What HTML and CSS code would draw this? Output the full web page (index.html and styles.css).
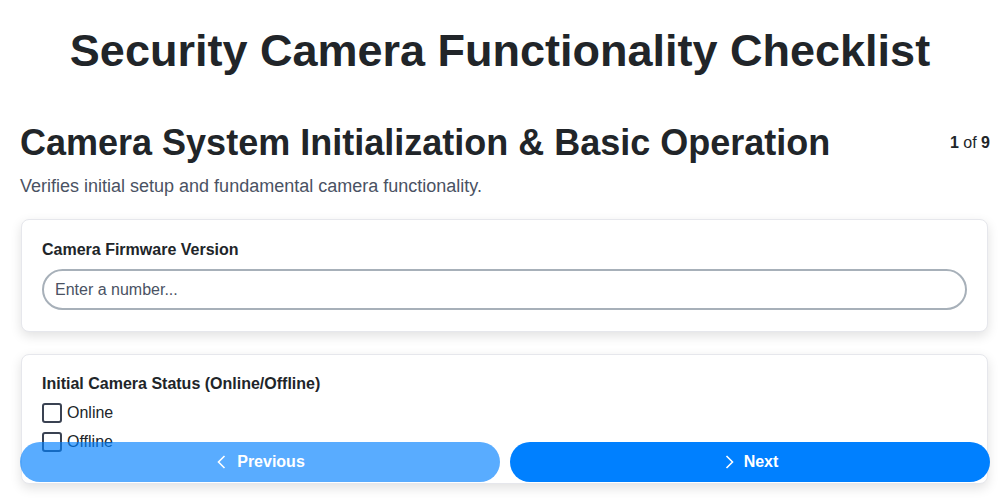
FILE: index.html
```html
<!DOCTYPE html>
<html>
	<head>
		<meta charset="utf-8"/>
		<meta name="viewport" content="width=device-width"/>
		<link rel="stylesheet" href="styles.css">
	</head>
	<body>
		<h1 class="title">Security Camera Functionality Checklist</h1>
		<div class="section">
			<div class="section-head">
				<h2>Camera System Initialization &amp; Basic Operation</h2>
				<div class="counter"><b>1</b> of <b>9</b></div>
			</div>
			<p class="desc">Verifies initial setup and fundamental camera functionality.</p>
			<div class="card">
				<label class="label">Camera Firmware Version</label>
				<input class="field" type="text" placeholder="Enter a number..."/>
			</div>
			<div class="card last">
				<label class="label">Initial Camera Status (Online/Offline)</label>
				<div class="check"><span class="box"></span>Online</div>
				<div class="check"><span class="box"></span>Offline</div>
			</div>
		</div>
		<div class="nav">
			<button class="btn prev" disabled>
				<svg width="14" height="16" viewBox="0 0 14 16"><path d="M9.5 2 L3.5 8 L9.5 14" fill="none" stroke="#fff" stroke-width="1.6"/></svg>
				Previous
			</button>
			<button class="btn next">
				<svg width="14" height="16" viewBox="0 0 14 16"><path d="M4.5 2 L10.5 8 L4.5 14" fill="none" stroke="#fff" stroke-width="1.6"/></svg>
				Next
			</button>
		</div>
	</body>
</html>
```

FILE: styles.css
```css
body{
	margin:0;
	height:100vh;
	overflow:hidden;
	font-family:"Liberation Sans", Arial, sans-serif;
	color:#212529;
	background:#fff;
}
.title{
	margin:0;
	padding-top:26px;
	text-align:center;
	font-size:45px;
	line-height:50px;
}
.section{
	padding:0 10px 0 20px;
	margin-top:46px;
}
.section-head{
	display:flex;
	justify-content:space-between;
	align-items:center;
}
.section-head h2{
	margin:0;
	font-size:36px;
	line-height:42px;
}
.counter{
	font-size:16px;
}
.desc{
	margin:12px 0 22px;
	font-size:18px;
	line-height:21px;
	color:#4a5263;
}
.card{
	margin:0 2px 22px 1px;
	padding:21px 20px 21px;
	border:1px solid #e6e7ec;
	border-radius:8px;
	box-shadow:0 4px 12px rgba(0,0,0,0.12);
	background:#fff;
}
.card.last{
	height:86px;
	padding-top:20px;
	padding-bottom:22px;
}
.label{
	display:block;
	font-weight:bold;
	font-size:16px;
	line-height:18px;
	margin-bottom:10px;
}
.last .label{
	margin-bottom:5px;
}
.field{
	display:block;
	width:100%;
	box-sizing:border-box;
	height:41px;
	border:2px solid #a7b0b9;
	border-radius:21px;
	padding:0 11px;
	font-family:inherit;
	font-size:16px;
	outline:none;
}
.field::placeholder{
	color:#4a5263;
}
.check{
	display:flex;
	align-items:center;
	font-size:16px;
	height:29px;
}
.box{
	width:16px;
	height:16px;
	border:2px solid #3a4252;
	border-radius:3px;
	margin-right:5px;
}
.nav{
	position:fixed;
	left:20px;
	right:10px;
	bottom:18px;
	display:flex;
	gap:10px;
}
.btn{
	flex:1;
	height:40px;
	border:none;
	border-radius:20px;
	color:#fff;
	background:#0080ff;
	font-family:inherit;
	font-size:16px;
	font-weight:bold;
	display:flex;
	align-items:center;
	justify-content:center;
	gap:8px;
}
.btn:disabled{
	opacity:0.65;
}
```
